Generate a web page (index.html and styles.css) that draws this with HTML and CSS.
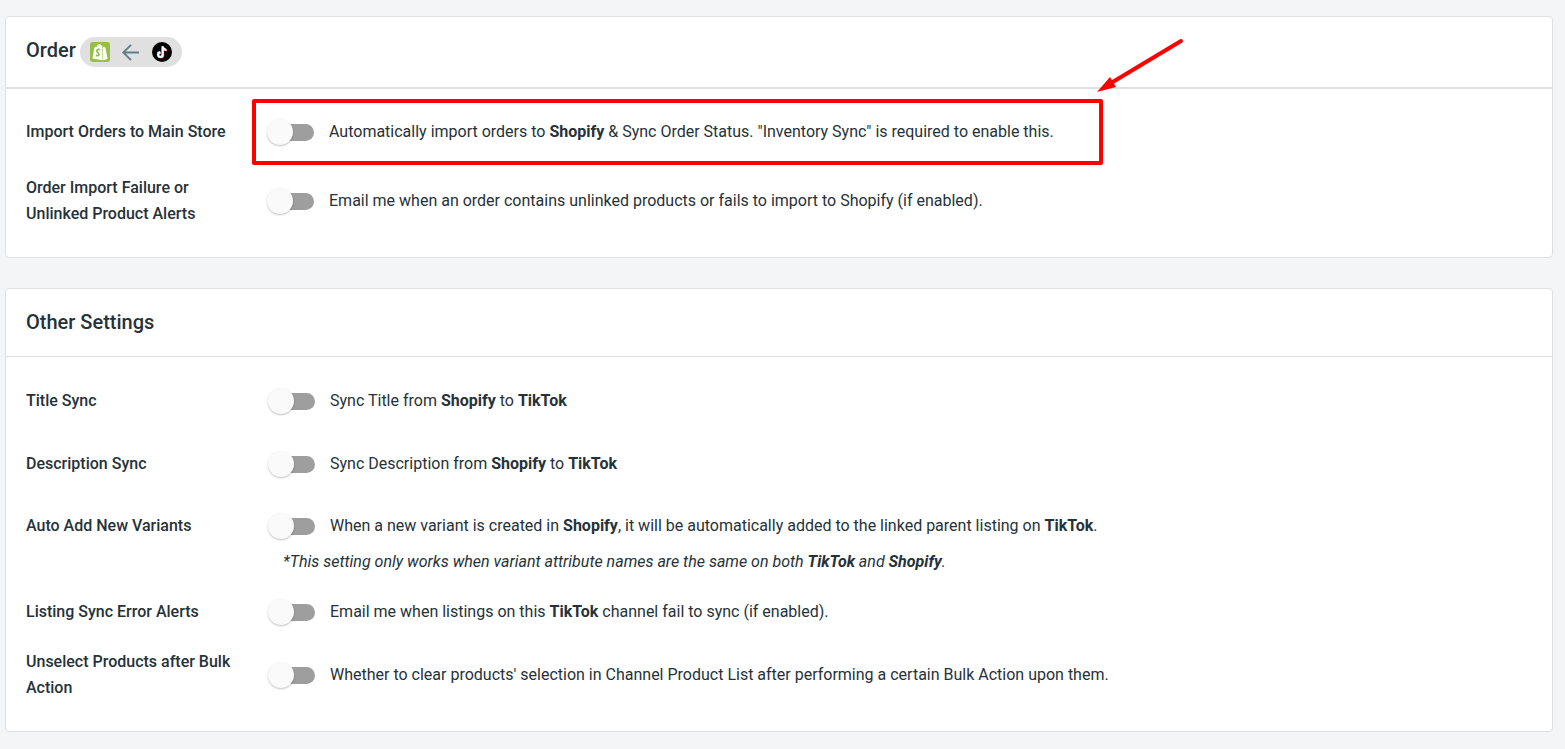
FILE: index.html
```html
<!DOCTYPE html>
<html lang="en">

<head>
    <meta charset="UTF-8" />
    <meta name="viewport" content="width=device-width, initial-scale=1.0" />
    <title>Channel Settings</title>
    <link rel="stylesheet" href="styles.css">
</head>

<body>
    <main class="settings">
        <section class="card card-order">
            <header class="card-header">
                <h2>Order</h2>
                <div class="flow">
                    <svg class="flow-icon" viewBox="0 0 20 20" aria-hidden="true">
                        <rect width="20" height="20" rx="3" fill="#95bf47" />
                        <path d="M4.4 5.6 6.6 5C7 3.100 8.200 1.900 9.500 2c.7 0 1.200.5 1.500 1.200l1 .4.7 14.700L2.500 16.600z" fill="#fff" />
                        <path d="m12.600 4 1 1.100 1.800.3 2.200 11.500-4.400 1.400z" fill="#fff" />
                        <path d="M7.700 4.800c.4-1.300 1-1.900 1.700-1.900" fill="none" stroke="#95bf47" stroke-width=".5" />
                        <path d="M10.200 7.700C8.500 6.900 6.600 7.700 6.800 9.400c.2 1.500 2.300 1.600 2.200 3.100-.1 1.500-1.800 1.500-3 .5" fill="none" stroke="#95bf47" stroke-width="1.700" />
                    </svg>
                    <svg class="flow-icon" viewBox="0 0 20 20" aria-hidden="true">
                        <path d="M18 10.500H2.500M10 2.800l-7.700 7.700 7.700 7.700" fill="none" stroke="#607d8b" stroke-width="1.900" />
                    </svg>
                    <svg class="flow-icon" viewBox="0 0 20 20" aria-hidden="true">
                        <circle cx="10" cy="10" r="10" fill="#000" />
                        <g fill="none" stroke-width="1.900">
                            <path d="M10.300 4v8.300a2.300 2.300 0 1 1-2.300-2.300M10.300 4.200c.2 2 1.700 3.200 3.700 3.300" stroke="#25f4ee" />
                            <path d="M11.300 5v8.300A2.300 2.300 0 1 1 9 11M11.300 5.200c.2 2 1.700 3.200 3.700 3.300" stroke="#fe2c55" />
                            <path d="M10.800 4.500v8.300a2.300 2.300 0 1 1-2.300-2.300M10.800 4.700c.2 2 1.700 3.200 3.700 3.300" stroke="#fff" />
                        </g>
                    </svg>
                </div>
            </header>
            <div class="card-body">
                <div class="row">
                    <label class="name" for="import-orders">Import Orders to Main Store</label>
                    <div class="option">
                        <input type="checkbox" class="switch" id="import-orders">
                        <label for="import-orders">Automatically import orders to <b>Shopify</b> &amp; Sync Order Status. "Inventory Sync" is required to enable this.</label>
                        <div class="highlight"></div>
                        <svg class="arrow" viewBox="0 0 88 56" aria-hidden="true">
                            <path d="M84 4 14 46" stroke="#f00" stroke-width="4" stroke-linecap="round" />
                            <path d="M0 55 13 40 19 50z" fill="#f00" />
                        </svg>
                    </div>
                </div>
                <div class="row">
                    <label class="name" for="order-alerts">Order Import Failure or Unlinked Product Alerts</label>
                    <div class="option">
                        <input type="checkbox" class="switch" id="order-alerts">
                        <label for="order-alerts">Email me when an order contains unlinked products or fails to import to Shopify (if enabled).</label>
                    </div>
                </div>
            </div>
        </section>

        <section class="card card-other">
            <header class="card-header">
                <h2>Other Settings</h2>
            </header>
            <div class="card-body">
                <div class="row">
                    <label class="name" for="title-sync">Title Sync</label>
                    <div class="option">
                        <input type="checkbox" class="switch" id="title-sync">
                        <label for="title-sync">Sync Title from <b>Shopify</b> to <b>TikTok</b></label>
                    </div>
                </div>
                <div class="row">
                    <label class="name" for="description-sync">Description Sync</label>
                    <div class="option">
                        <input type="checkbox" class="switch" id="description-sync">
                        <label for="description-sync">Sync Description from <b>Shopify</b> to <b>TikTok</b></label>
                    </div>
                </div>
                <div class="row row-note">
                    <label class="name" for="new-variants">Auto Add New Variants</label>
                    <div>
                        <div class="option">
                            <input type="checkbox" class="switch" id="new-variants">
                            <label for="new-variants">When a new variant is created in <b>Shopify</b>, it will be automatically added to the linked parent listing on <b>TikTok</b>.</label>
                        </div>
                        <p class="note">*This setting only works when variant attribute names are the same on both <b>TikTok</b> and <b>Shopify</b>.</p>
                    </div>
                </div>
                <div class="row">
                    <label class="name" for="listing-alerts">Listing Sync Error Alerts</label>
                    <div class="option">
                        <input type="checkbox" class="switch" id="listing-alerts">
                        <label for="listing-alerts">Email me when listings on this <b>TikTok</b> channel fail to sync (if enabled).</label>
                    </div>
                </div>
                <div class="row">
                    <label class="name" for="unselect-products">Unselect Products after Bulk Action</label>
                    <div class="option">
                        <input type="checkbox" class="switch" id="unselect-products">
                        <label for="unselect-products">Whether to clear products' selection in Channel Product List after performing a certain Bulk Action upon them.</label>
                    </div>
                </div>
            </div>
        </section>
    </main>
</body>

</html>
```
FILE: styles.css
```css
* {
    margin: 0;
    padding: 0;
    box-sizing: border-box;
}

body {
    font-family: Roboto, "Liberation Sans", sans-serif;
    font-size: 16px;
    line-height: 26px;
    color: #263238;
    background: #f4f5f7;
}

.settings {
    display: flex;
    flex-direction: column;
    gap: 30px;
    padding: 16px 12px 16px 5px;
}

/* Cards */
.card {
    background: #fff;
    border: 1px solid #e0e0e0;
    border-radius: 4px;
}

.card-header {
    display: flex;
    align-items: flex-start;
    gap: 4px;
    padding: 20px;
    border-bottom: 1px solid #e0e0e0;
}

.card-order .card-header {
    border-bottom-width: 2px;
}

.card-header h2 {
    font-size: 20px;
    font-weight: 500;
    line-height: 27px;
}

.card-body {
    display: flex;
    flex-direction: column;
    gap: 11px;
    padding: 18px 20px 30px;
}

.card-order .card-body {
    gap: 17px;
    padding-top: 17px;
}

/* Sync direction badge */
.flow {
    display: flex;
    gap: 11px;
    padding: 5px 10px;
    border-radius: 15px;
    background: #e0e0e0;
}

.flow-icon {
    width: 20px;
    height: 20px;
}

/* Setting rows */
.row {
    display: grid;
    grid-template-columns: 212px 1fr;
    column-gap: 30px;
    align-items: center;
    min-height: 52px;
}

.card-order .row {
    column-gap: 29px;
}

.row-note {
    align-items: start;
    padding-top: 12px;
}

.name {
    font-weight: 500;
}

.option {
    position: relative;
    display: flex;
    align-items: center;
    gap: 15px;
}

.note {
    margin-top: 10px;
    padding-left: 15px;
    font-style: italic;
}

/* Switch */
.switch {
    appearance: none;
    display: flex;
    align-items: center;
    flex: none;
    width: 47px;
    height: 26px;
    cursor: pointer;
}

.switch::before {
    content: "";
    z-index: 1;
    flex: none;
    width: 26px;
    height: 26px;
    border-radius: 50%;
    background: #fafafa;
    box-shadow: 0 1px 2px rgba(0, 0, 0, 0.25);
}

.switch::after {
    content: "";
    flex: none;
    width: 35px;
    height: 17px;
    margin-left: -14px;
    border-radius: 9px;
    background: #9e9e9e;
}

.switch:checked {
    flex-direction: row-reverse;
}

.switch:checked::after {
    margin: 0 -14px 0 0;
    background: #607d8b;
}

/* Callout over the first setting */
.highlight {
    position: absolute;
    top: -20px;
    left: -15px;
    width: 851px;
    height: 66px;
    border: 4px solid #f00;
    border-radius: 2px;
    pointer-events: none;
}

.arrow {
    position: absolute;
    top: -82px;
    left: 830px;
    width: 88px;
    height: 56px;
    pointer-events: none;
}
```
